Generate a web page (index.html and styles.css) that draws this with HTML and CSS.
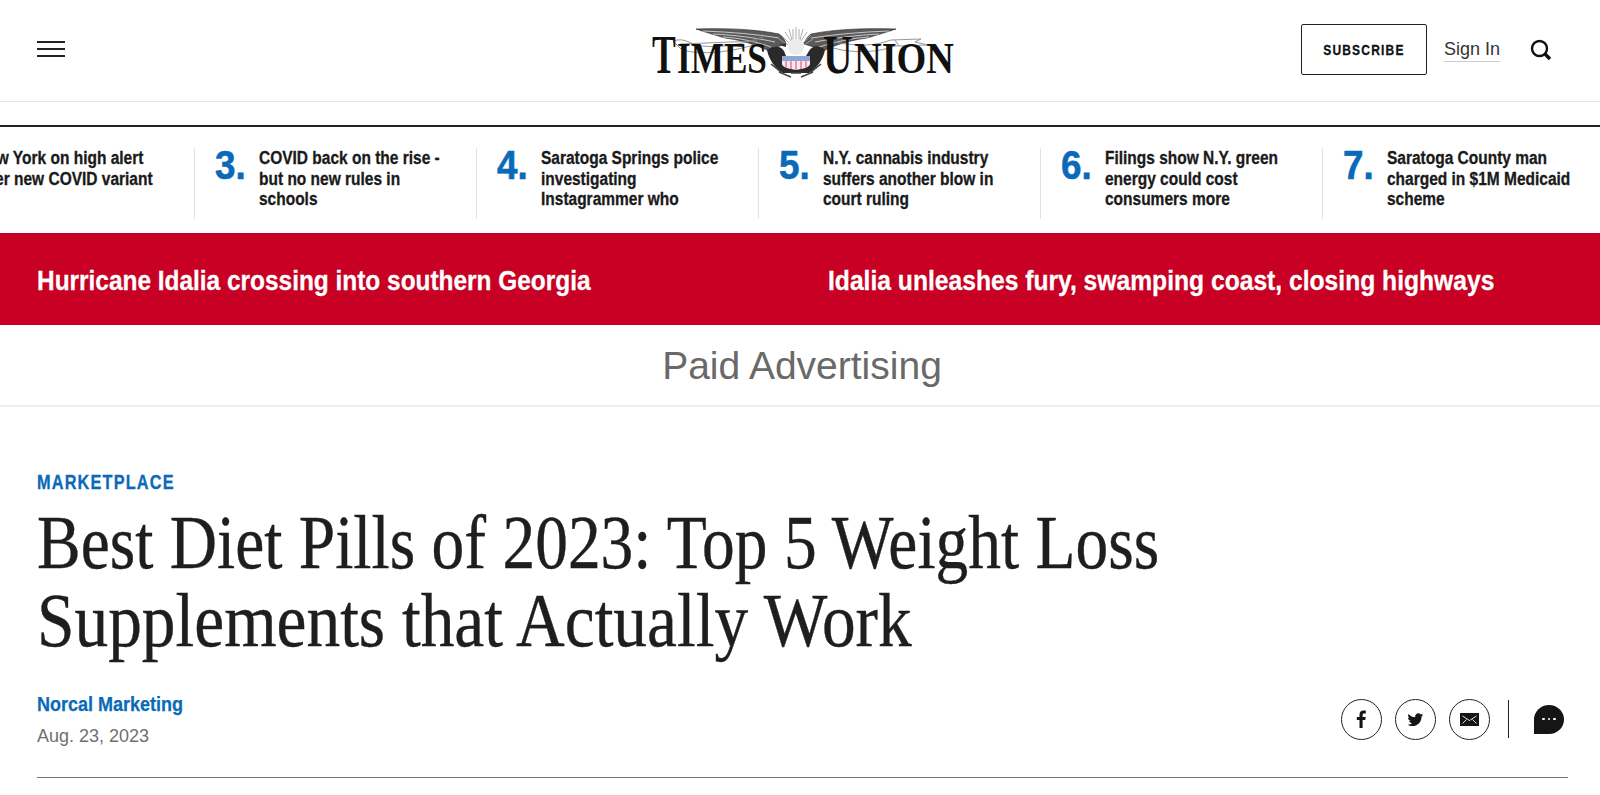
FILE: index.html
```html
<!DOCTYPE html>
<html lang="en">
<head>
<meta charset="utf-8">
<title>Best Diet Pills of 2023</title>
<link rel="stylesheet" href="styles.css">
</head>
<body>
<header class="topbar">
  <button class="burger" aria-label="Menu"><span></span><span></span><span></span></button>
  <a class="logo" aria-label="Times Union">
    <svg width="300" height="60" viewBox="0 0 300 60">
      <g transform="translate(-8 5)">
        <path class="wing" d="M51 3 C80 2 110 3 134 8 C138 11 140 14 141 18 C134 20 128 22 124 25 C110 18 95 14 80 12 C70 9 60 6 51 3Z"/>
        <path class="wing" d="M251 3 C222 2 190 3 166 8 C162 11 160 14 159 18 C166 20 172 22 178 25 C192 18 207 14 222 12 C232 9 242 6 251 3Z"/>
        <path class="feather" d="M58 5 C85 6 110 8 134 12 M68 8 C90 9 112 12 130 16 M78 11 C95 12 112 16 126 21 M244 5 C217 6 192 8 166 12 M234 8 C212 9 190 12 170 16 M224 11 C207 12 190 16 174 21"/>
        <path class="ribbon" d="M28 15 C40 11 44 18 56 20 C75 22 95 19 118 11 M28 15 L36 23 C50 29 80 28 112 18 M35 18 L112 15"/>
        <path class="ribbon" d="M182 15 C205 19 225 22 246 14 L276 13 M188 22 C210 28 235 26 250 20 L283 19 M250 14 L254 20 M276 13 L270 16 L283 19"/>
        <path class="body" d="M122 24 C130 19 136 20 139 25 L141 30 L161 30 L164 25 C168 19 174 19 180 24 C178 34 172 42 164 47 L138 47 C130 42 124 34 122 24Z"/>
        <path class="rays" d="M151 1 V13 M148 3 V13 M154 3 V13 M144 3 L147 14 M158 3 L155 14 M140 6 L146 15 M162 6 L156 15 M136 9 L144 17 M166 9 L158 17 M134 13 L143 19 M168 13 L159 19"/>
        <ellipse class="head" cx="151" cy="21" rx="8" ry="8"/>
        <path class="beak" d="M141 17 L134 19 L141 21Z"/>
        <rect class="canton" x="137" y="30" width="28" height="5"/>
        <path class="shield" d="M137 35 H165 V38 C165 41 158 43 151 44 C144 43 137 41 137 38Z"/>
        <path class="stripes" d="M141 35 V41 M146 35 V43 M151 35 V44 M156 35 V43 M161 35 V41"/>
        <path class="talon" d="M126 38 L137 47 M176 38 L165 47 M134 46 L146 51 M168 46 L156 51 M146 47 L156 47"/>
      </g>
      <text class="logo-cap" transform="translate(-1 52) scale(.66 1)">T</text>
      <text class="logo-word" transform="translate(24 52) scale(.8 1)">IMES</text>
      <text class="logo-cap" transform="translate(170 52) scale(.76 1)">U</text>
      <text class="logo-word" transform="translate(201 52) scale(.87 1)">NION</text>
    </svg>
  </a>
  <div class="actions">
    <a class="subscribe"><span>SUBSCRIBE</span></a>
    <a class="signin">Sign In</a>
    <svg class="search" width="22" height="22" viewBox="0 0 22 22"><circle cx="9.500" cy="9.500" r="7.500"/><path class="handle" d="M14.800 14.800 L20 20"/></svg>
  </div>
</header>

<section class="ticker">
  <ol class="track">
    <li class="item"><span class="num">2.</span><a>New York on high alert over new COVID variant</a></li>
    <li class="item"><span class="num">3.</span><a>COVID back on the rise - but no new rules in schools</a></li>
    <li class="item"><span class="num">4.</span><a>Saratoga Springs police investigating Instagrammer who</a></li>
    <li class="item"><span class="num">5.</span><a>N.Y. cannabis industry suffers another blow in court ruling</a></li>
    <li class="item"><span class="num">6.</span><a>Filings show N.Y. green energy could cost consumers more</a></li>
    <li class="item"><span class="num">7.</span><a>Saratoga County man charged in $1M Medicaid scheme</a></li>
  </ol>
</section>

<section class="alert">
  <a>Hurricane Idalia crossing into southern Georgia</a>
  <a>Idalia unleashes fury, swamping coast, closing highways</a>
</section>

<div class="paid">Paid Advertising</div>

<main class="article">
  <div class="kicker">MARKETPLACE</div>
  <h1 class="headline"><span>Best Diet Pills of 2023: Top 5 Weight Loss</span><span class="line-two">Supplements that Actually Work</span></h1>
  <div class="meta">
    <div class="byline">
      <a class="author">Norcal Marketing</a>
      <time class="date">Aug. 23, 2023</time>
    </div>
    <div class="share">
      <a class="round"><svg width="22" height="22" viewBox="0 0 22 22"><path class="solid" d="M12.600 20 V12 H15.300 L15.700 8.900 H12.600 V7 C12.600 6.100 12.900 5.500 14.200 5.500 H15.800 V2.700 C15.500 2.700 14.600 2.600 13.500 2.600 C11.100 2.600 9.500 4 9.500 6.700 V8.900 H6.800 V12 H9.500 V20Z"/></svg></a>
      <a class="round"><svg width="17" height="17" viewBox="0 0 24 24"><path class="solid" d="M23 5.500 C22.200 5.900 21.300 6.100 20.400 6.200 C21.300 5.600 22 4.800 22.400 3.700 C21.500 4.200 20.500 4.600 19.500 4.800 C18.600 3.900 17.400 3.300 16 3.300 C13.500 3.300 11.500 5.400 11.500 7.900 C11.500 8.300 11.500 8.600 11.600 8.900 C7.800 8.700 4.400 6.900 2.200 4.100 C1.800 4.800 1.600 5.600 1.600 6.400 C1.600 8 2.400 9.400 3.600 10.200 C2.900 10.200 2.200 10 1.500 9.600 C1.500 11.900 3.100 13.700 5.200 14.100 C4.500 14.300 3.800 14.300 3.100 14.200 C3.700 16 5.400 17.300 7.300 17.400 C5.300 18.900 3 19.600 .700 19.300 C2.700 20.600 5 21.300 7.600 21.300 C15.900 21.300 20.500 14.400 20.500 8.400 V7.800 C21.500 7.200 22.300 6.400 23 5.500Z"/></svg></a>
      <a class="round"><svg width="19" height="13" viewBox="0 0 19 13"><rect class="solid" width="19" height="13"/><path class="mail" d="M2.500 3 L9.500 7.500 L16.500 3 M2.500 10.500 L6.500 6.500 M16.500 10.500 L12.500 6.500"/></svg></a>
      <span class="sep"></span>
      <a class="comment"><i></i><i></i><i></i></a>
    </div>
  </div>
  <hr class="rule">
</main>
</body>
</html>
```
FILE: styles.css
```css
* { box-sizing: border-box; }
html, body { margin: 0; padding: 0; }
body { height: 795px; overflow: hidden; background: #fff; color: #1e1e1e; font-family: "Liberation Sans", Arial, sans-serif; }
a { color: inherit; text-decoration: none; }

.topbar { height: 102px; border-bottom: 1px solid #e4e4e4; padding: 0 31px 0 37px; display: grid; grid-template-columns: 1fr auto 1fr; align-items: center; }
.burger { width: 28px; height: 16px; padding: 0; border: 0; background: none; display: flex; flex-direction: column; justify-content: space-between; margin-bottom: 3px; }
.burger span { display: block; height: 2px; background: #222; }
.logo { width: 300px; height: 60px; margin-top: 0; }
.logo svg { display: block; overflow: visible; }
.logo-word { font-family: "Liberation Serif", serif; font-weight: 700; font-size: 44px; fill: #111; }
.logo-cap { font-family: "Liberation Serif", serif; font-weight: 700; font-size: 54px; fill: #111; }
.wing { fill: #5a5a5a; stroke: #222; stroke-width: .6; }
.feather { fill: none; stroke: #e2e2e2; stroke-width: .8; }
.ribbon { fill: none; stroke: #8a8a8a; stroke-width: .9; }
.body { fill: #2a2a2a; }
.rays { stroke: #a5a5a5; stroke-width: .9; }
.head { fill: #ececec; }
.beak { fill: #333; }
.canton { fill: #8ea6d8; }
.shield { fill: #fbe7ee; }
.stripes { stroke: #ea8aa6; stroke-width: 1.800; fill: none; }
.talon { stroke: #444; stroke-width: 1.500; fill: none; }

.actions { display: flex; align-items: center; justify-content: flex-end; }
.subscribe { width: 126px; height: 51px; border: 1px solid #222; border-radius: 2px; display: flex; align-items: center; justify-content: center; font-weight: 700; font-size: 15px; letter-spacing: 1.500px; color: #111; margin-bottom: 2px; -webkit-text-stroke: .3px #111; }
.subscribe span { transform: scaleX(.8); white-space: nowrap; }
.signin { font-size: 18px; line-height: 21px; margin-left: 17px; color: #333; border-bottom: 1px solid #ccc; padding-bottom: 1px; }
.search { margin-left: 30px; margin-right: 17px; fill: none; stroke: #111; stroke-width: 2.400; margin-bottom: 2px; flex: none; }
.handle { stroke-width: 3.500; }

.ticker { margin-top: 23px; border-top: 2px solid #222; padding-top: 21px; overflow: hidden; height: 108px; }
.track { list-style: none; margin: 0 0 0 -87px; padding: 0; display: flex; width: 1692px; }
.item { flex: none; width: 282px; height: 71px; border-right: 1px solid #e2e2e2; display: flex; padding-left: 20px; }
.num { width: 44px; flex: none; font-weight: 700; font-size: 40px; line-height: 35px; color: #0a6ab8; -webkit-text-stroke: .6px #0a6ab8; transform: scaleX(.92); transform-origin: left top; }
.item a { flex: none; width: 222px; font-weight: 700; font-size: 17.500px; line-height: 20.500px; color: #1a1a1a; -webkit-text-stroke: .3px #1a1a1a; transform: scaleX(.885); transform-origin: left top; }

.alert { height: 92px; background: #c80023; display: grid; grid-template-columns: 791px 1fr; align-items: center; padding: 4px 0 0 37px; color: #fff; font-weight: 700; font-size: 28px; -webkit-text-stroke: .3px #fff; }
.alert a { white-space: nowrap; transform: scaleX(.872); transform-origin: left center; }
.alert a:last-child { transform: scaleX(.88); }

.paid { height: 82px; padding: 1px 0 0 4px; border-bottom: 2px solid #eee; display: flex; align-items: center; justify-content: center; font-size: 39px; color: #696969; }

.article { padding: 64px 32px 0 37px; }
.kicker { font-weight: 700; font-size: 19.500px; letter-spacing: 1.400px; line-height: 22px; color: #0a6ab8; -webkit-text-stroke: .3px #0a6ab8; transform: scaleX(.835); transform-origin: left center; }
.headline { margin: 10px 0 0; font-family: "Liberation Serif", serif; font-weight: 400; font-size: 77px; line-height: 78px; color: #1e1e1e; -webkit-text-stroke: .4px #1e1e1e; }
.headline span { display: block; white-space: nowrap; transform: scaleX(.85); transform-origin: left center; }
.headline .line-two { transform: scaleX(.875); }
.meta { display: flex; justify-content: space-between; margin-top: 33px; height: 85px; }
.author { display: block; font-weight: 700; font-size: 20px; line-height: 24px; color: #0a6ab8; -webkit-text-stroke: .25px #0a6ab8; transform: scaleX(.9); transform-origin: left center; }
.date { display: block; font-size: 18px; line-height: 21px; margin-top: 10px; color: #707070; }
.share { display: flex; align-items: center; height: 40px; margin-top: 7px; padding-right: 4px; }
.round { width: 41px; height: 41px; border: 1.500px solid #222; border-radius: 50%; display: flex; align-items: center; justify-content: center; margin-right: 13px; }
.solid { fill: #151515; }
.mail { stroke: #ddd; stroke-width: 1; fill: none; }
.sep { width: 1.500px; height: 38px; background: #222; margin: 0 25px 0 5px; }
.comment { width: 30px; height: 29px; background: #151515; border-radius: 50% 50% 50% 0; display: flex; align-items: center; justify-content: center; gap: 3px; }
.comment i { width: 2.500px; height: 2.500px; border-radius: 50%; background: #fff; }
.rule { margin: 0; border: 0; border-top: 1px solid #777; }
```
